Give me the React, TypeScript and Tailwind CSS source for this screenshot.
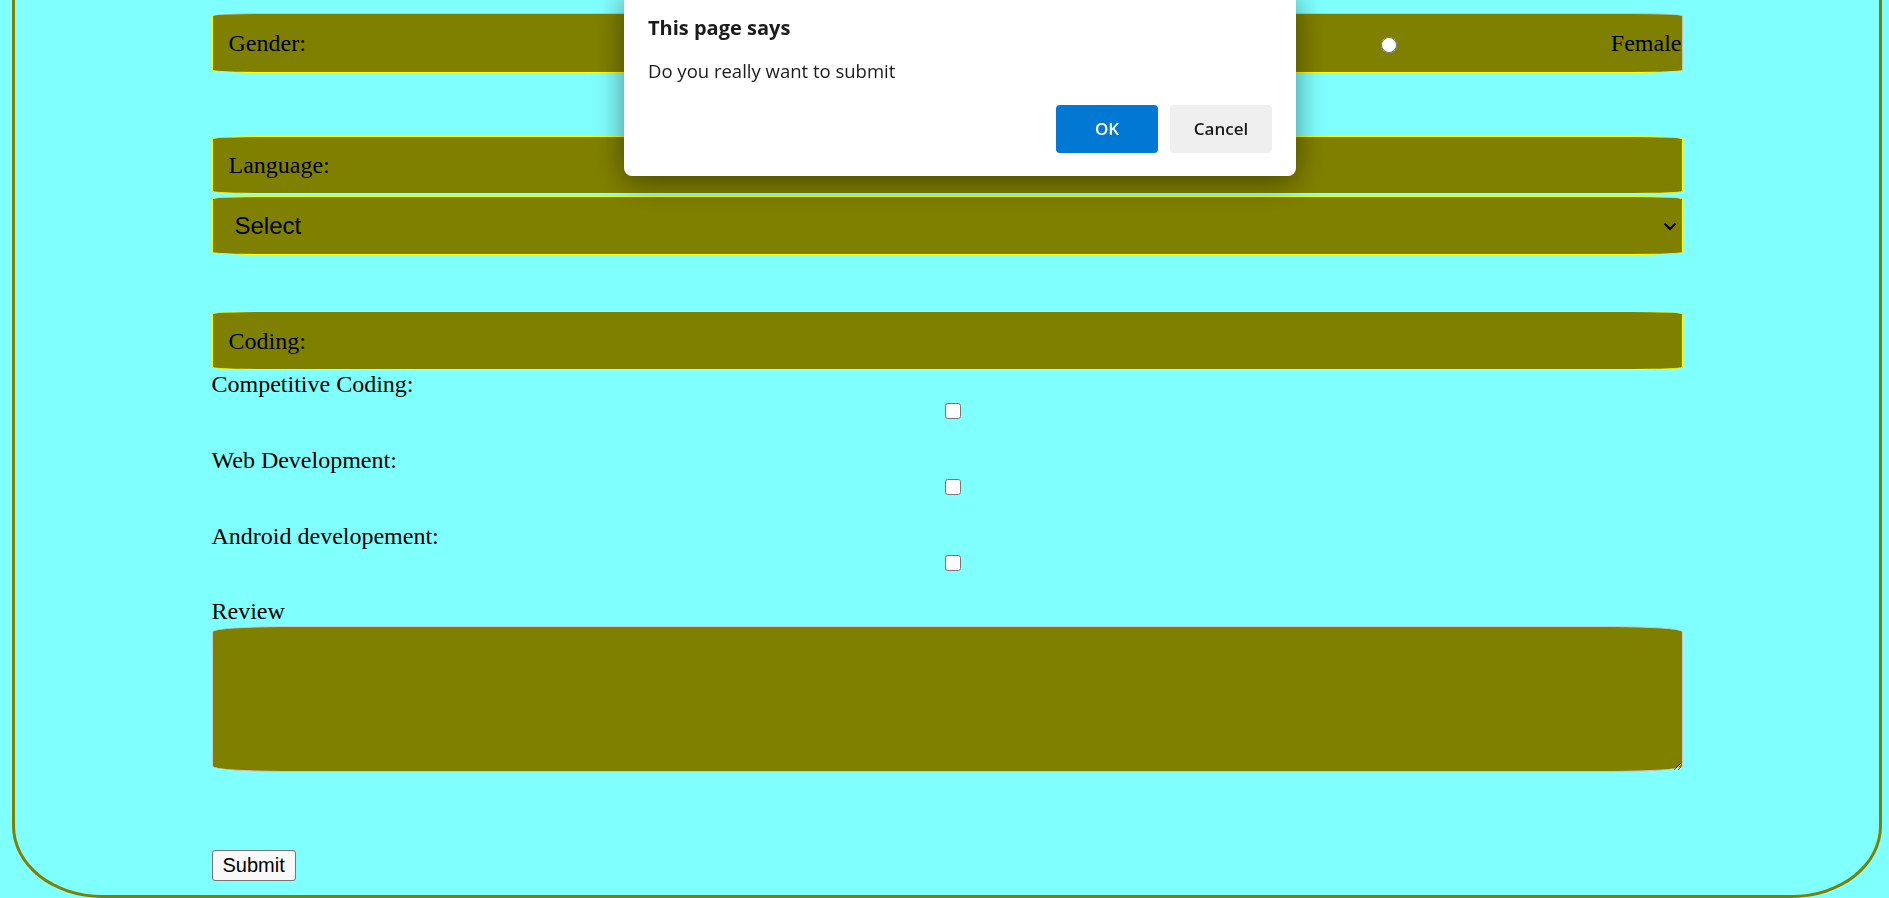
import { FormEvent } from "react"

const bar =
  "flex items-center rounded-[50px_/_3px] border border-[#ffff00] bg-[#808000]"

const skills = ["Competitive Coding:", "Web Development:", "Android developement:"]

export default function App() {
  const handleSubmit = (e: FormEvent<HTMLFormElement>) => {
    e.preventDefault()
  }

  return (
    <div className="relative min-h-screen overflow-hidden bg-[#80ffff] font-['Liberation_Serif',serif] text-[24px] leading-[28px] text-black">
      <div className="ml-[12px] mr-[7px] h-[898px] rounded-b-[90px_72px] border-x-[3px] border-b-[3px] border-[#808000] pt-[13px]">
        <form className="mx-auto w-[1471px]" onSubmit={handleSubmit}>
          {/* gender */}
          <div
            className={`${bar} h-[60px] border-r-[#c4c4b4] border-t-[#c4c4b4] pl-[16px]`}
          >
            <span>Gender:</span>
            <input type="radio" name="gender" className="ml-[620px] h-4 w-4" />
            <span className="ml-[150px]">Male</span>
            <input type="radio" name="gender" className="ml-[240px] mt-[4px] h-4 w-4" />
            <span className="ml-auto">Female</span>
          </div>

          {/* language */}
          <div className={`${bar} mt-[63px] h-[58px] pl-[16px]`}>
            <span>Language:</span>
          </div>
          <div className="relative mt-[2px]">
            <select className="block h-[59px] w-full appearance-none rounded-[50px_/_3px] border border-[#ffff00] bg-[#808000] pl-[22px] font-['Liberation_Sans',sans-serif] text-[24px] text-black outline-none">
              <option>Select</option>
              <option>C</option>
              <option>C++</option>
              <option>Java</option>
              <option>Python</option>
            </select>
            <svg
              className="pointer-events-none absolute right-[6px] top-[26px] h-[9px] w-[14px]"
              viewBox="0 0 14 9"
              fill="none"
            >
              <path d="M1.5 1.5 7 7l5.5-5.5" stroke="#000" strokeWidth="2" />
            </svg>
          </div>

          {/* coding */}
          <div className={`${bar} mt-[56px] h-[59px] pl-[16px]`}>
            <span>Coding:</span>
          </div>
          {skills.map((s, i) => (
            <div key={s} className={i > 0 ? "mt-[22px]" : ""}>
              <div>{s}</div>
              <div className="flex h-[26px] items-center justify-center pl-[12px]">
                <input type="checkbox" className="m-0 h-4 w-4" />
              </div>
            </div>
          ))}

          {/* review */}
          <div className="mt-[21px]">Review</div>
          <textarea className="mt-[1px] block h-[146px] w-full rounded-[70px_/_6px] border border-[#c8c8c8] bg-[#808000] outline-none" />

          <button
            type="submit"
            className="mt-[78px] block h-[31px] rounded-[3px] border border-[#767676] bg-[#f8f8f8] px-[10px] font-['Liberation_Sans',sans-serif] text-[20px] leading-[23px] text-black"
          >
            Submit
          </button>
        </form>
      </div>

      {/* confirm dialog */}
      <div className="fixed left-[624px] top-[-8px] w-[672px] rounded-[8px] bg-white px-[24px] pb-[23px] pt-[22px] font-['Open_Sans',sans-serif] text-[#1b1b1b] shadow-[0_6px_30px_rgba(0,0,0,0.45)]">
        <div className="text-[20px] font-bold leading-[28px]">This page says</div>
        <div className="mt-[17px] text-[18.5px] leading-[24px]">Do you really want to submit</div>
        <div className="mt-[22px] flex justify-end gap-[12px]">
          <button className="h-[48px] w-[102px] rounded-[4px] bg-[#0078d4] text-[17px] font-semibold text-white">
            OK
          </button>
          <button className="h-[48px] w-[102px] rounded-[4px] bg-[#efefef] text-[17px] font-semibold text-[#1b1b1b]">
            Cancel
          </button>
        </div>
      </div>
    </div>
  )
}
